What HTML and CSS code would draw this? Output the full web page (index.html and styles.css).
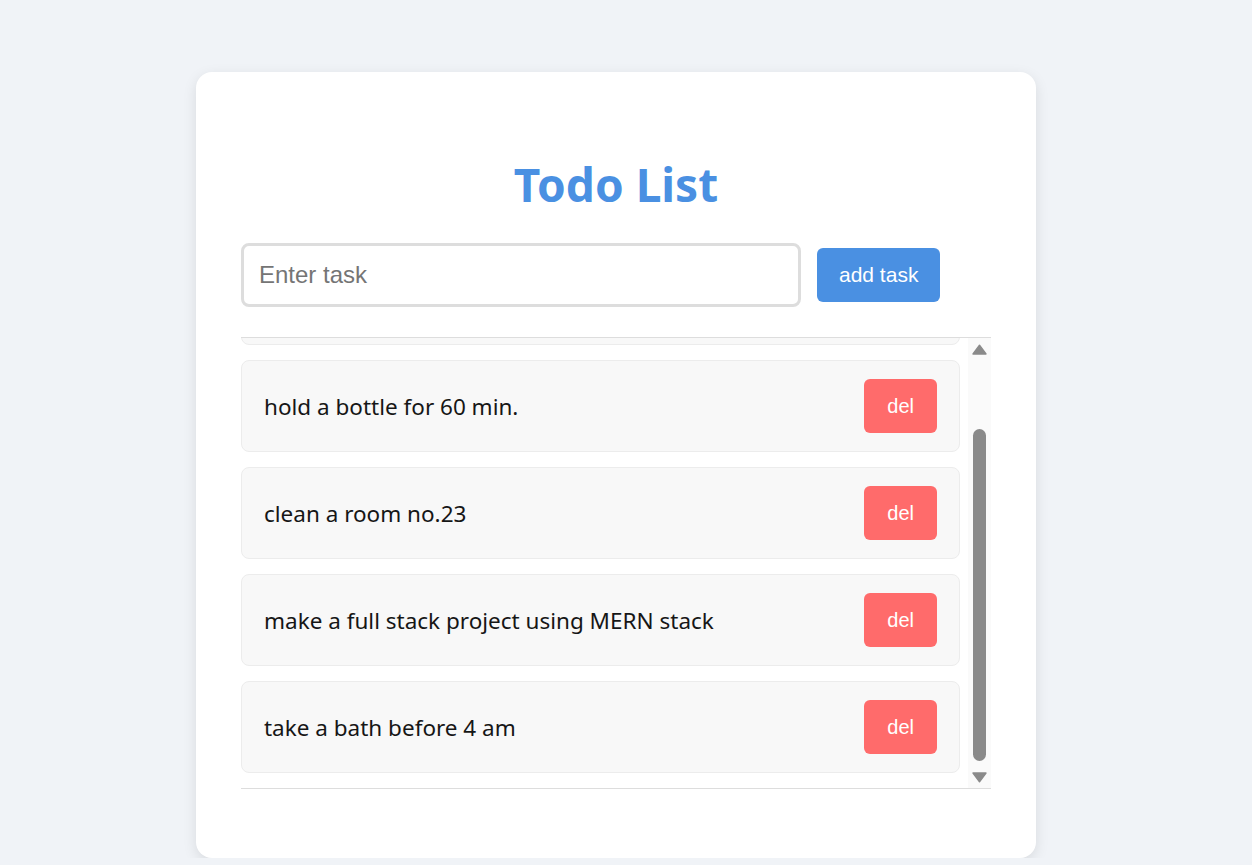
FILE: index.html
```html
<!DOCTYPE html>
<html lang="en">
<head>
<meta charset="utf-8">
<title>Todo List</title>
<link rel="stylesheet" href="styles.css">
</head>
<body>
<div class="page">
  <main class="card">
    <h1 class="title">Todo List</h1>
    <div class="entry">
      <input class="task-input" type="text" placeholder="Enter task">
      <button class="add-btn" type="button">add task</button>
    </div>
    <div class="list-wrap">
      <ul class="list">
        <li class="item"><span class="item-text">go for a morning walk</span><button class="del-btn" type="button">del</button></li>
        <li class="item"><span class="item-text">hold a bottle for 60 min.</span><button class="del-btn" type="button">del</button></li>
        <li class="item"><span class="item-text">clean a room no.23</span><button class="del-btn" type="button">del</button></li>
        <li class="item"><span class="item-text">make a full stack project using MERN stack</span><button class="del-btn" type="button">del</button></li>
        <li class="item"><span class="item-text">take a bath before 4 am</span><button class="del-btn" type="button">del</button></li>
      </ul>
      <div class="scrollbar" aria-hidden="true">
        <svg class="sb-arrow sb-up" width="15" height="11" viewBox="0 0 15 11"><path d="M7.5 1.2 L14 10 H1 Z" fill="#8a8a8a" stroke="#8a8a8a" stroke-width="1.4" stroke-linejoin="round"/></svg>
        <div class="sb-thumb"></div>
        <svg class="sb-arrow sb-down" width="15" height="11" viewBox="0 0 15 11"><path d="M7.5 9.8 L14 1 H1 Z" fill="#8a8a8a" stroke="#8a8a8a" stroke-width="1.4" stroke-linejoin="round"/></svg>
      </div>
    </div>
  </main>
</div>
<script src="script.js"></script>
</body>
</html>
```

FILE: styles.css
```css
* { box-sizing: border-box; }

body {
  margin: 0;
  padding: 0;
  background: #f0f3f7;
}

.page {
  display: flex;
  justify-content: center;
  padding: 72px 20px 0 0;
}

.card {
  width: 840px;
  background: #ffffff;
  border-radius: 16px;
  box-shadow: 0 4px 14px rgba(0, 0, 0, 0.1);
  padding: 45px 45px 69px;
}

.title {
  margin: 37px 0 29px;
  font-family: "Noto Sans", sans-serif;
  font-weight: 700;
  font-size: 46px;
  line-height: 60px;
  text-align: center;
  color: #4a90e2;
}

.entry {
  display: flex;
  align-items: center;
}

.task-input {
  width: 560px;
  height: 64px;
  border: 3px solid #dddddd;
  border-radius: 8px;
  padding: 0 15px;
  font-family: "Liberation Sans", Arial, sans-serif;
  font-size: 24px;
  color: #222;
  outline: none;
}

.task-input::placeholder { color: #757575; }

.add-btn {
  margin-left: 16px;
  padding: 15px 22px;
  border: none;
  border-radius: 6px;
  background: #4a90e2;
  color: #ffffff;
  font-family: "Liberation Sans", Arial, sans-serif;
  font-size: 21px;
  line-height: 24px;
}

.list-wrap {
  display: flex;
  margin-top: 30px;
  height: 452px;
  border-top: 1px solid #dddddd;
  border-bottom: 1px solid #dddddd;
}

.list {
  flex: 1;
  list-style: none;
  margin: 0;
  padding: 10px 8px 0 0;
  overflow-y: auto;
  scrollbar-width: none;
}

.item {
  display: flex;
  align-items: center;
  justify-content: space-between;
  padding: 18px 22px;
  margin-bottom: 15px;
  background: #f8f8f8;
  border: 1px solid #ececec;
  border-radius: 8px;
}

.item-text {
  font-family: "Noto Sans", sans-serif;
  font-size: 22.5px;
  color: #161616;
}

.del-btn {
  padding: 15px 23px;
  border: none;
  border-radius: 6px;
  background: #ff6b6b;
  color: #ffffff;
  font-family: "Liberation Sans", Arial, sans-serif;
  font-size: 20px;
  line-height: 24px;
}

.scrollbar {
  width: 23px;
  flex: none;
  display: flex;
  flex-direction: column;
  align-items: center;
  background: #fafafa;
}

.sb-arrow { display: block; flex: none; }
.sb-up { margin-top: 6px; }
.sb-down { margin-bottom: 5px; }

.sb-thumb {
  width: 13px;
  height: 332px;
  margin-top: auto;
  margin-bottom: 11px;
  border-radius: 7px;
  background: #8a8a8a;
}
```

FILE: script.js
```js
var list = document.querySelector('.list');
list.scrollTop = list.scrollHeight;
```
